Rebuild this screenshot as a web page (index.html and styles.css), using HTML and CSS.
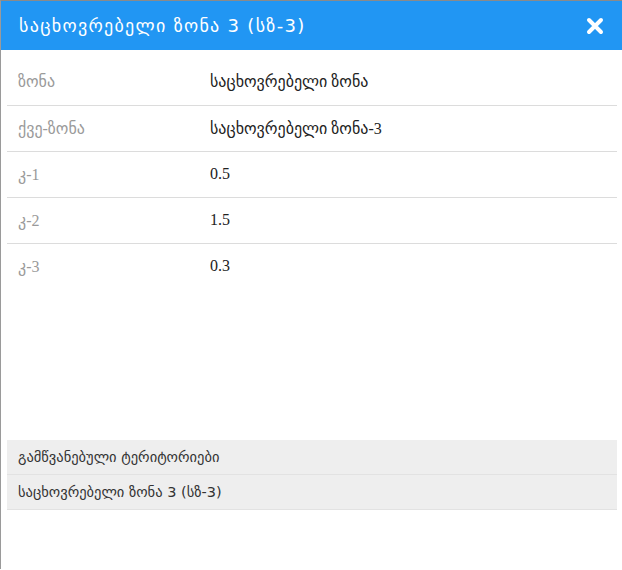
FILE: index.html
```html
<!DOCTYPE html>
<html lang="ka">
<head>
<meta charset="utf-8">
<title>საცხოვრებელი ზონა 3 (სზ-3)</title>
<link rel="stylesheet" href="styles.css">
</head>
<body>
<div class="panel">
  <header class="panel-header">
    <h1 class="panel-title">საცხოვრებელი ზონა 3 (სზ-3)</h1>
    <button class="close-btn" aria-label="close">
      <svg width="18" height="18" viewBox="0 0 18 18"><path d="M3 3 L15 15 M15 3 L3 15" stroke="#fff" stroke-width="4" stroke-linecap="round"/></svg>
    </button>
  </header>
  <div class="panel-body">
    <table class="attr-table">
      <tr><td class="attr-label">ზონა</td><td class="attr-value">საცხოვრებელი ზონა</td></tr>
      <tr><td class="attr-label">ქვე-ზონა</td><td class="attr-value">საცხოვრებელი ზონა-3</td></tr>
      <tr><td class="attr-label">კ-1</td><td class="attr-value">0.5</td></tr>
      <tr><td class="attr-label">კ-2</td><td class="attr-value">1.5</td></tr>
      <tr><td class="attr-label">კ-3</td><td class="attr-value">0.3</td></tr>
    </table>
    <ul class="layer-list">
      <li class="layer-item">გამწვანებული ტერიტორიები</li>
      <li class="layer-item">საცხოვრებელი ზონა 3 (სზ-3)</li>
    </ul>
  </div>
</div>
</body>
</html>
```
FILE: styles.css
```css
html, body {
  margin: 0;
  padding: 0;
  background: #fff;
}
body {
  font-family: "Liberation Serif", "DejaVu Sans", serif;
  height: 570px;
  overflow: hidden;
}
.panel {
  border-top: 1px solid #8a8a8a;
  border-left: 1px solid #9a9a9a;
  height: 569px;
  box-sizing: border-box;
}
.panel-header {
  background: #2196f3;
  height: 49px;
  display: flex;
  align-items: center;
  justify-content: space-between;
  padding: 0 18px 0 18px;
}
.panel-title {
  margin: 0;
  color: #fff;
  font-family: "DejaVu Sans", sans-serif;
  font-weight: normal;
  font-size: 18px;
  letter-spacing: 1.3px;
}
.close-btn {
  background: none;
  border: 0;
  padding: 0;
  width: 18px;
  height: 18px;
  display: flex;
}
.panel-body {
  padding: 9px 5px 0 6px;
}
.attr-table {
  width: 100%;
  border-collapse: collapse;
}
.attr-table tr {
  height: 46px;
  border-bottom: 1px solid #dcdcdc;
}
.attr-table tr:last-child {
  border-bottom: 0;
}
.attr-label {
  width: 192px;
  padding: 0 0 0 11px;
  color: #9a9a9a;
  font-size: 16px;
}
.attr-value {
  padding: 0;
  color: #222;
  font-size: 16px;
}
.attr-value:lang(ka) {
  font-size: 16px;
}
.layer-list {
  list-style: none;
  margin: 151px 0 0;
  padding: 0;
}
.layer-item {
  background: #eeeeee;
  border-bottom: 1px solid #e2e2e2;
  height: 34px;
  line-height: 34px;
  padding-left: 11px;
  font-family: "DejaVu Sans", sans-serif;
  font-size: 14.5px;
  color: #333;
}
```
